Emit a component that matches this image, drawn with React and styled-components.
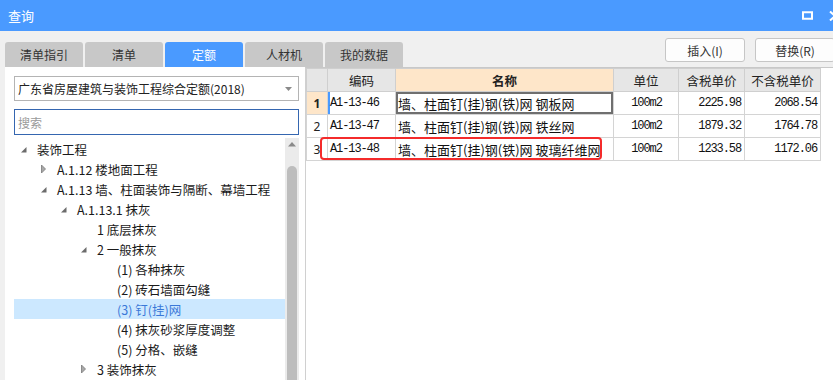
import React from "react"
import styled, { createGlobalStyle } from "styled-components"

const GlobalStyle = createGlobalStyle`
  body {
    margin: 0;
    background: #f0f0f0;
    font-family: "Noto Sans CJK SC", "Noto Sans", sans-serif;
  }
`

const Window = styled.div`
  width: 833px;
  height: 380px;
  overflow: hidden;
  display: flex;
  flex-direction: column;
  background: #f0f0f0;
`

const TitleBar = styled.div`
  height: 31px;
  flex: none;
  background: #4a9aff;
  display: flex;
  align-items: center;
  padding-left: 8px;
  color: #fff;
  font-size: 13px;
`

const Title = styled.div`
  flex: 1;
`

const WinIcons = styled.div`
  display: flex;
  align-items: center;
  gap: 16px;
  margin-right: -8px;
`

const TopBar = styled.div`
  height: 36px;
  flex: none;
  display: flex;
  padding-left: 5px;
`

const Tabs = styled.div`
  display: flex;
  gap: 2px;
  align-self: flex-end;
  flex: 1;
`

const Tab = styled.div`
  width: 78px;
  height: 25px;
  display: flex;
  align-items: center;
  justify-content: center;
  border-radius: 3px 3px 0 0;
  font-size: 12px;
  background: ${(p) => (p.active ? "#4a9aff" : "#c8c8c8")};
  color: ${(p) => (p.active ? "#fff" : "#333")};
`

const Buttons = styled.div`
  display: flex;
  gap: 10px;
  margin-top: 7px;
  margin-right: -2px;
`

const Button = styled.div`
  width: 78px;
  height: 22px;
  border: 1px solid #c6c6c6;
  border-radius: 3px;
  background: #fdfdfd;
  display: flex;
  align-items: center;
  justify-content: center;
  font-size: 12px;
  color: #333;
`

const Content = styled.div`
  flex: 1;
  display: flex;
  min-height: 0;
`

const LeftPanel = styled.div`
  width: 300px;
  margin-left: 5px;
  background: #fff;
  padding: 9px 6px 0 9px;
  box-sizing: border-box;
  display: flex;
  flex-direction: column;
`

const Select = styled.div`
  height: 25px;
  border: 1px solid #b4b4b4;
  box-sizing: border-box;
  display: flex;
  align-items: center;
  padding: 0 6px 0 3px;
  font-size: 12px;
  color: #222;
`

const SelectText = styled.div`
  flex: 1;
`

const Search = styled.div`
  height: 26px;
  margin-top: 8px;
  border: 1px solid #3566b0;
  box-sizing: border-box;
  display: flex;
  align-items: center;
  padding-left: 3px;
  font-size: 12px;
  color: #9a9a9a;
`

const TreeArea = styled.div`
  margin-top: 3px;
  flex: 1;
  display: flex;
  min-height: 0;
`

const TreeList = styled.div`
  flex: 1;
  padding-top: 1px;
`

const TreeRow = styled.div`
  height: 20px;
  display: flex;
  align-items: center;
  padding-left: ${(p) => 7 + p.level * 20}px;
  font-size: 12.5px;
  white-space: nowrap;
  background: ${(p) => (p.selected ? "#cce8ff" : "transparent")};
  color: ${(p) => (p.selected ? "#3a78d8" : "#1a1a1a")};
`

const TreeIcon = styled.svg`
  width: 16px;
  height: 20px;
  flex: none;
`

const Scrollbar = styled.div`
  width: 14px;
  background: #ebebeb;
  display: flex;
  flex-direction: column;
  align-items: center;
`

const Thumb = styled.div`
  width: 10px;
  flex: 1;
  margin-top: 16px;
  border-radius: 5px 5px 0 0;
  background: #bdbdbd;
`

const RightPanel = styled.div`
  flex: 1;
  background: #fff;
  border-top: 1px solid #c8c8c8;
  border-left: 1px solid #d0d0d0;
`

const TableWrap = styled.div`
  position: relative;
  width: 514px;
`

const Table = styled.table`
  border-collapse: collapse;
  table-layout: fixed;
  width: 514px;
`

const Th = styled.th`
  height: 22px;
  padding: 0;
  font-size: 12.5px;
  font-weight: ${(p) => (p.hot ? 700 : 400)};
  color: #222;
  background: ${(p) => (p.hot ? "#fee6c9" : "#e6e6e6")};
  border: 1px solid #cfcfcf;
`

const Td = styled.td`
  height: 22px;
  padding: 0 ${(p) => (p.align === "right" ? 3 : 2)}px 0 ${(p) => (p.align === "left" ? 2 : 3)}px;
  border: 1px solid #d4d4d4;
  text-align: ${(p) => p.align || "center"};
  font-family: ${(p) =>
    p.mono ? '"Liberation Mono", monospace' : '"Noto Sans CJK SC", sans-serif'};
  font-size: ${(p) => (p.mono ? "12px" : "13px")};
  letter-spacing: ${(p) => (p.mono ? "-1.1px" : "0")};
  color: #111;
  white-space: nowrap;
  overflow: hidden;
  box-shadow: ${(p) =>
    p.focus ? "inset 0 0 0 2px #6f6f6f" : p.mark ? "inset 2px 0 0 #4a9aff" : "none"};
`

const NumCell = styled.td`
  height: 22px;
  padding: 0;
  border: 1px solid #d4d4d4;
  text-align: center;
  font-family: "Noto Sans", sans-serif;
  font-size: 12px;
  font-weight: ${(p) => (p.current ? 700 : 400)};
  background: ${(p) => (p.current ? "#fee6c9" : "#fff")};
  color: #222;
`

const Highlight = styled.div`
  position: absolute;
  left: 14px;
  top: 69px;
  width: 282px;
  height: 23px;
  border: 2px solid #f42b2b;
  border-radius: 4px;
  box-sizing: border-box;
  pointer-events: none;
`

const tree = [
  { l: 0, icon: "open", t: "装饰工程" },
  { l: 1, icon: "closed", t: "A.1.12 楼地面工程" },
  { l: 1, icon: "open", t: "A.1.13 墙、柱面装饰与隔断、幕墙工程" },
  { l: 2, icon: "open", t: "A.1.13.1 抹灰" },
  { l: 3, t: "1 底层抹灰" },
  { l: 3, icon: "open", t: "2 一般抹灰" },
  { l: 4, t: "(1) 各种抹灰" },
  { l: 4, t: "(2) 砖石墙面勾缝" },
  { l: 4, t: "(3) 钉(挂)网", sel: true },
  { l: 4, t: "(4) 抹灰砂浆厚度调整" },
  { l: 4, t: "(5) 分格、嵌缝" },
  { l: 3, icon: "closed", t: "3 装饰抹灰" },
]

const rows = [
  ["A1-13-46", "墙、柱面钉(挂)钢(铁)网 钢板网", "100m2", "2225.98", "2068.54"],
  ["A1-13-47", "墙、柱面钉(挂)钢(铁)网 铁丝网", "100m2", "1879.32", "1764.78"],
  ["A1-13-48", "墙、柱面钉(挂)钢(铁)网 玻璃纤维网", "100m2", "1233.58", "1172.06"],
]

const Arrow = ({ type }) => (
  <TreeIcon viewBox="0 0 16 20">
    {type === "open" && <polygon points="5.5,8 5.5,13.5 0,13.5" fill="#6b6b6b" />}
    {type === "closed" && (
      <polygon points="0.5,6 4.5,10 0.5,14" fill="#a8a8a8" stroke="#7a7a7a" strokeWidth="0.8" />
    )}
  </TreeIcon>
)

const App = () => {
  return (
    <Window>
      <GlobalStyle />
      <TitleBar>
        <Title>查询</Title>
        <WinIcons>
          <svg width="11" height="9" viewBox="0 0 11 9">
            <rect x="1" y="1.25" width="9" height="6.5" fill="none" stroke="#fff" strokeWidth="2" />
          </svg>
          <svg width="12" height="10" viewBox="0 0 12 10">
            <path d="M1 0.5 L11 9.5 M11 0.5 L1 9.5" stroke="#fff" strokeWidth="2" />
          </svg>
        </WinIcons>
      </TitleBar>
      <TopBar>
        <Tabs>
          <Tab>清单指引</Tab>
          <Tab>清单</Tab>
          <Tab active>定额</Tab>
          <Tab>人材机</Tab>
          <Tab>我的数据</Tab>
        </Tabs>
        <Buttons>
          <Button>插入(I)</Button>
          <Button>替换(R)</Button>
        </Buttons>
      </TopBar>
      <Content>
        <LeftPanel>
          <Select>
            <SelectText>广东省房屋建筑与装饰工程综合定额(2018)</SelectText>
            <svg width="7" height="4" viewBox="0 0 7 4">
              <polygon points="0,0 7,0 3.5,4" fill="#8a8a8a" />
            </svg>
          </Select>
          <Search>搜索</Search>
          <TreeArea>
            <TreeList>
              {tree.map((n, i) => (
                <TreeRow key={i} level={n.l} selected={n.sel}>
                  <Arrow type={n.icon} />
                  {n.t}
                </TreeRow>
              ))}
            </TreeList>
            <Scrollbar>
              <svg width="14" height="10" viewBox="0 0 14 10" style={{ marginTop: 2 }}>
                <polygon points="7,2 11,6.5 3,6.5" fill="#8a8a8a" />
              </svg>
              <Thumb />
            </Scrollbar>
          </TreeArea>
        </LeftPanel>
        <RightPanel>
          <TableWrap>
            <Table>
              <colgroup>
                <col style={{ width: 21 }} />
                <col style={{ width: 68 }} />
                <col style={{ width: 218 }} />
                <col style={{ width: 65 }} />
                <col style={{ width: 66 }} />
                <col style={{ width: 76 }} />
              </colgroup>
              <thead>
                <tr>
                  <Th />
                  <Th>编码</Th>
                  <Th hot>名称</Th>
                  <Th>单位</Th>
                  <Th>含税单价</Th>
                  <Th>不含税单价</Th>
                </tr>
              </thead>
              <tbody>
                {rows.map((r, i) => (
                  <tr key={r[0]}>
                    <NumCell current={i === 0}>{i + 1}</NumCell>
                    <Td mono align="left" mark={i === 0}>{r[0]}</Td>
                    <Td align="left" focus={i === 0}>{r[1]}</Td>
                    <Td mono>{r[2]}</Td>
                    <Td mono align="right">{r[3]}</Td>
                    <Td mono align="right">{r[4]}</Td>
                  </tr>
                ))}
              </tbody>
            </Table>
            <Highlight />
          </TableWrap>
        </RightPanel>
      </Content>
    </Window>
  )
}

export default App
